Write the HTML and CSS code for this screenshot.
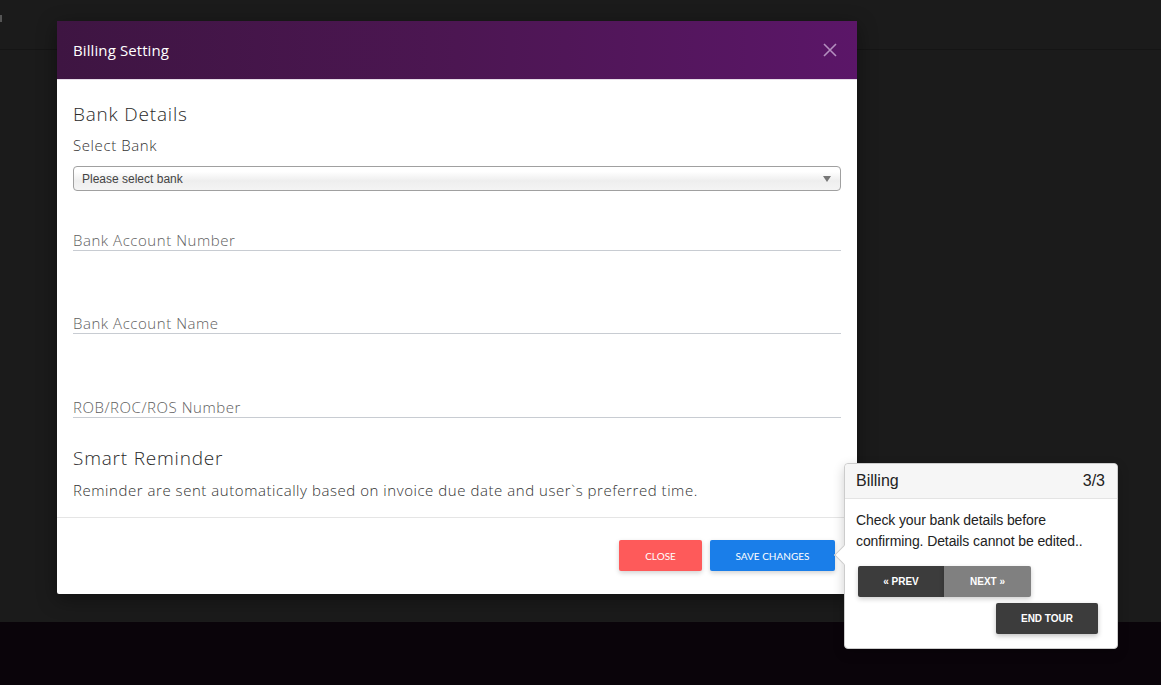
FILE: index.html
```html
<!DOCTYPE html>
<html lang="en">
<head>
    <meta charset="UTF-8">
    <title>Billing Setting</title>
    <link rel="stylesheet" href="styles.css">
</head>
<body>
    <div class="page">
        <div class="topbar"><span class="topbar-mark"></span></div>
        <div class="content"></div>
        <div class="footer"></div>
    </div>

    <div class="modal">
        <div class="modal-header">
            <h4 class="modal-title">Billing Setting</h4>
            <span class="modal-close">
                <svg width="14" height="14" viewBox="0 0 14 14"><path d="M1 1L13 13M13 1L1 13" stroke="currentColor" stroke-width="1.6" fill="none"/></svg>
            </span>
        </div>
        <div class="modal-body">
            <h3 class="section-title">Bank Details</h3>
            <label class="field-label">Select Bank</label>
            <div class="select-box">
                <span>Please select bank</span>
                <span class="select-arrow"></span>
            </div>

            <div class="line-field">Bank Account Number</div>
            <div class="line-field">Bank Account Name</div>
            <div class="line-field">ROB/ROC/ROS Number</div>

            <h3 class="section-title reminder-title">Smart Reminder</h3>
            <p class="reminder-text">Reminder are sent automatically based on invoice due date and user`s preferred time.</p>
        </div>
        <div class="modal-footer">
            <button class="btn btn-close">Close</button>
            <button class="btn btn-save">Save Changes</button>
        </div>
    </div>

    <div class="tour">
        <div class="tour-arrow"></div>
        <div class="tour-header">
            <span>Billing</span>
            <span>3/3</span>
        </div>
        <div class="tour-body">
            Check your bank details before confirming. Details cannot be edited..
        </div>
        <div class="tour-nav">
            <button class="tour-btn tour-prev">&laquo; Prev</button><button class="tour-btn tour-next">Next &raquo;</button>
        </div>
        <div class="tour-end-row">
            <button class="tour-btn tour-end">End Tour</button>
        </div>
    </div>
</body>
</html>
```

FILE: styles.css
```css
* {
    margin: 0;
    padding: 0;
    box-sizing: border-box;
}

body {
    font-family: 'Open Sans', 'Lato', sans-serif;
    background: #1b1b1b;
    height: 685px;
    overflow: hidden;
}

.page {
    display: flex;
    flex-direction: column;
    height: 685px;
}

.topbar {
    height: 50px;
    background: #1b1b1b;
    border-bottom: 1px solid #151515;
    padding-top: 15px;
}

.topbar-mark {
    display: block;
    width: 2px;
    height: 7px;
    background: #555;
}

.content {
    flex: 1;
    background: #1b1b1b;
}

.footer {
    height: 63px;
    background: #0a040a;
}

/* modal */
.modal {
    position: absolute;
    top: 21px;
    left: 57px;
    width: 800px;
    height: 573px;
    background: #fff;
    border-radius: 2px;
    display: flex;
    flex-direction: column;
    box-shadow: 0 5px 20px rgba(0, 0, 0, 0.4);
}

.modal-header {
    height: 59px;
    background: linear-gradient(90deg, #3e1542 0%, #4c1652 50%, #5b1668 100%);
    display: flex;
    align-items: center;
    justify-content: space-between;
    padding: 0 20px 0 16px;
    border-bottom: 1px solid #e6dce8;
}

.modal-title {
    color: #fff;
    font-size: 15px;
    font-weight: 400;
    letter-spacing: 0.1px;
}

.modal-close {
    color: #b48fbf;
    display: flex;
}

.modal-body {
    padding: 21px 16px 0 16px;
    flex: 1;
    border-bottom: 1px solid #e5e5e5;
}

.section-title {
    font-size: 19px;
    font-weight: 300;
    color: #2a2a2a;
    line-height: 26px;
    letter-spacing: 0.8px;
}

.field-label {
    display: block;
    font-size: 15px;
    font-weight: 300;
    color: #333;
    margin-top: 8px;
    line-height: 20px;
    letter-spacing: 0.6px;
}

.select-box {
    margin-top: 11px;
    height: 25px;
    border: 1px solid #a0a0a0;
    border-radius: 4px;
    background: linear-gradient(#ffffff 20%, #eeeeee 60%, #f4f4f4 100%);
    display: flex;
    align-items: center;
    justify-content: space-between;
    padding: 0 9px 0 8px;
    font-family: 'Liberation Sans', Arial, sans-serif;
    font-size: 12px;
    color: #444;
}

.select-arrow {
    width: 0;
    height: 0;
    border-left: 4px solid transparent;
    border-right: 4px solid transparent;
    border-top: 6px solid #777;
}

.line-field {
    margin-top: 38px;
    height: 22px;
    border-bottom: 1px solid #c8ccd2;
    font-size: 15px;
    font-weight: 300;
    color: #5e5e5e;
    line-height: 20px;
    padding-top: 1px;
    letter-spacing: 0.55px;
}

.line-field + .line-field {
    margin-top: 61px;
}

.line-field:last-of-type {
    margin-top: 62px;
}

.reminder-title {
    margin-top: 27px;
}

.reminder-text {
    margin-top: 9px;
    font-size: 15px;
    font-weight: 300;
    color: #333;
    line-height: 20px;
    letter-spacing: 0.55px;
}

.modal-footer {
    height: 76px;
    display: flex;
    justify-content: flex-end;
    align-items: flex-start;
    gap: 8px;
    padding: 22px 22px 0 0;
}

.btn {
    height: 31px;
    border: none;
    border-radius: 2px;
    color: #fff;
    font-family: 'Lato', sans-serif;
    font-size: 10px;
    text-transform: uppercase;
    box-shadow: 0 2px 5px rgba(0, 0, 0, 0.18);
}

.btn-close {
    width: 83px;
    background: #fe5a5a;
}

.btn-save {
    width: 125px;
    background: #1a7ee9;
}

/* tour popover */
.tour {
    position: absolute;
    top: 463px;
    left: 844px;
    width: 274px;
    height: 186px;
    background: #fff;
    border: 1px solid #ccc;
    border-radius: 4px;
    font-family: 'Liberation Sans', Arial, sans-serif;
    box-shadow: 0 4px 12px rgba(0, 0, 0, 0.2);
}

.tour-arrow {
    position: absolute;
    left: -8px;
    top: 84px;
    width: 14px;
    height: 14px;
    background: #fff;
    border-left: 1px solid #ccc;
    border-bottom: 1px solid #ccc;
    transform: rotate(45deg);
}

.tour-header {
    height: 35px;
    background: #f6f6f6;
    border-bottom: 1px solid #e4e4e4;
    border-radius: 4px 4px 0 0;
    display: flex;
    align-items: center;
    justify-content: space-between;
    padding: 0 12px 0 11px;
    font-size: 16px;
    color: #222;
}

.tour-body {
    padding: 11px 12px 0 11px;
    font-size: 14px;
    line-height: 21px;
    color: #222;
    letter-spacing: -0.1px;
}

.tour-nav {
    display: flex;
    margin: 14px 0 0 13px;
}

.tour-btn {
    height: 31px;
    border: none;
    color: #fff;
    font-family: 'Liberation Sans', Arial, sans-serif;
    font-size: 10px;
    font-weight: 700;
    text-transform: uppercase;
}

.tour-prev {
    width: 86px;
    background: #3c3c3c;
    border-radius: 2px 0 0 2px;
    box-shadow: 0 2px 5px rgba(0, 0, 0, 0.2);
}

.tour-next {
    width: 87px;
    background: #808080;
    border-radius: 0 2px 2px 0;
    box-shadow: 0 2px 5px rgba(0, 0, 0, 0.2);
}

.tour-end-row {
    display: flex;
    justify-content: flex-end;
    padding: 6px 19px 0 0;
}

.tour-end {
    width: 102px;
    background: #3c3c3c;
    border-radius: 2px;
    box-shadow: 0 2px 5px rgba(0, 0, 0, 0.25);
}
```
